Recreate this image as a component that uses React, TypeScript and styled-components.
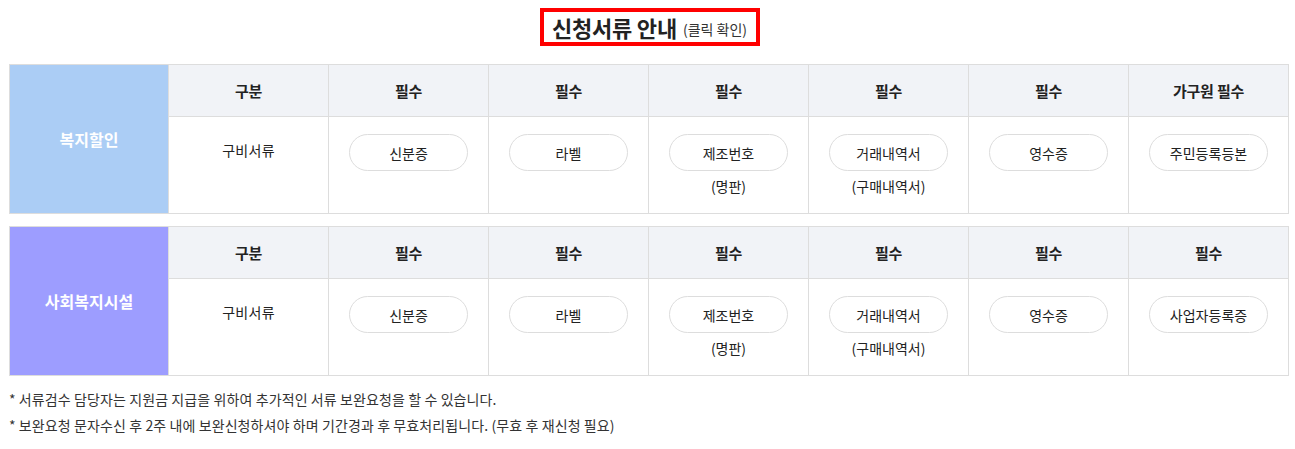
import React from "react";
import styled, { createGlobalStyle } from "styled-components";

const Global = createGlobalStyle`
  html, body { margin: 0; padding: 0; background: #fff; }
  body { font-family: "Noto Sans CJK KR", "Noto Sans", sans-serif; color: #222; }
`;

const Page = styled.div`
  padding: 8px 0 0 9px;
  width: 1280px;
`;

const TitleRow = styled.div`
  display: flex;
  justify-content: center;
  margin-bottom: 18px;
`;

const TitleBox = styled.div`
  border: 4px solid #ff0000;
  height: 30px;
  padding: 0 9px 0 8px;
  display: flex;
  align-items: center;
  gap: 6px;
  margin-left: 2px;
`;

const TitleMain = styled.span`
  font-size: 22px;
  font-weight: 700;
  letter-spacing: -0.2px;
  color: #222;
  line-height: 30px;
`;

const TitleSub = styled.span`
  font-size: 14px;
  color: #333;
  line-height: 30px;
  padding-top: 3px;
`;

const Table = styled.div`
  display: grid;
  grid-template-columns: 158px repeat(7, 159px);
  grid-template-rows: 51px 96px;
  gap: 1px;
  padding: 1px;
  background: #dddddd;
  margin-bottom: 12px;
`;

const Category = styled.div<{ $bg: string }>`
  grid-row: 1 / span 2;
  background: ${(p) => p.$bg};
  color: #fff;
  font-size: 16px;
  font-weight: 700;
  display: flex;
  align-items: center;
  justify-content: center;
`;

const Head = styled.div`
  background: #f1f3f7;
  display: flex;
  align-items: center;
  justify-content: center;
  font-size: 15px;
  font-weight: 700;
  color: #222;
  letter-spacing: -0.2px;
`;

const Cell = styled.div`
  background: #fff;
  display: flex;
  flex-direction: column;
  align-items: center;
  padding-top: 17px;
`;

const PlainText = styled.div`
  font-size: 14px;
  line-height: 20px;
  padding-top: 6px;
  color: #222;
  letter-spacing: 0.3px;
`;

const Pill = styled.button`
  width: 119px;
  height: 37px;
  border: 1px solid #dddddd;
  border-radius: 19px;
  background: #fff;
  font-family: inherit;
  font-size: 14px;
  color: #222;
  cursor: pointer;
  padding: 0;
`;

const SubText = styled.div`
  margin-top: 5px;
  font-size: 14px;
  line-height: 20px;
  color: #222;
`;

const Notes = styled.div`
  margin-top: 13px;
  display: flex;
  flex-direction: column;
  gap: 6px;
`;

const Note = styled.p`
  margin: 0;
  font-size: 14px;
  line-height: 20px;
  color: #333;
  letter-spacing: 0.1px;
`;

type Doc = { label: string; sub?: string };

const sections: { name: string; bg: string; heads: string[]; docs: Doc[] }[] = [
  {
    name: "복지할인",
    bg: "#abcdf5",
    heads: ["필수", "필수", "필수", "필수", "필수", "가구원 필수"],
    docs: [
      { label: "신분증" },
      { label: "라벨" },
      { label: "제조번호", sub: "(명판)" },
      { label: "거래내역서", sub: "(구매내역서)" },
      { label: "영수증" },
      { label: "주민등록등본" },
    ],
  },
  {
    name: "사회복지시설",
    bg: "#9d9dff",
    heads: ["필수", "필수", "필수", "필수", "필수", "필수"],
    docs: [
      { label: "신분증" },
      { label: "라벨" },
      { label: "제조번호", sub: "(명판)" },
      { label: "거래내역서", sub: "(구매내역서)" },
      { label: "영수증" },
      { label: "사업자등록증" },
    ],
  },
];

export default function App() {
  return (
    <>
      <Global />
      <Page>
        <TitleRow>
          <TitleBox>
            <TitleMain>신청서류 안내</TitleMain>
            <TitleSub>(클릭 확인)</TitleSub>
          </TitleBox>
        </TitleRow>
        {sections.map((s) => (
          <Table key={s.name}>
            <Category $bg={s.bg}>{s.name}</Category>
            <Head>구분</Head>
            {s.heads.map((h, i) => (
              <Head key={i}>{h}</Head>
            ))}
            <Cell>
              <PlainText>구비서류</PlainText>
            </Cell>
            {s.docs.map((d, i) => (
              <Cell key={i}>
                <Pill>{d.label}</Pill>
                {d.sub && <SubText>{d.sub}</SubText>}
              </Cell>
            ))}
          </Table>
        ))}
        <Notes>
          <Note>* 서류검수 담당자는 지원금 지급을 위하여 추가적인 서류 보완요청을 할 수 있습니다.</Note>
          <Note>* 보완요청 문자수신 후 2주 내에 보완신청하셔야 하며 기간경과 후 무효처리됩니다. (무효 후 재신청 필요)</Note>
        </Notes>
      </Page>
    </>
  );
}
